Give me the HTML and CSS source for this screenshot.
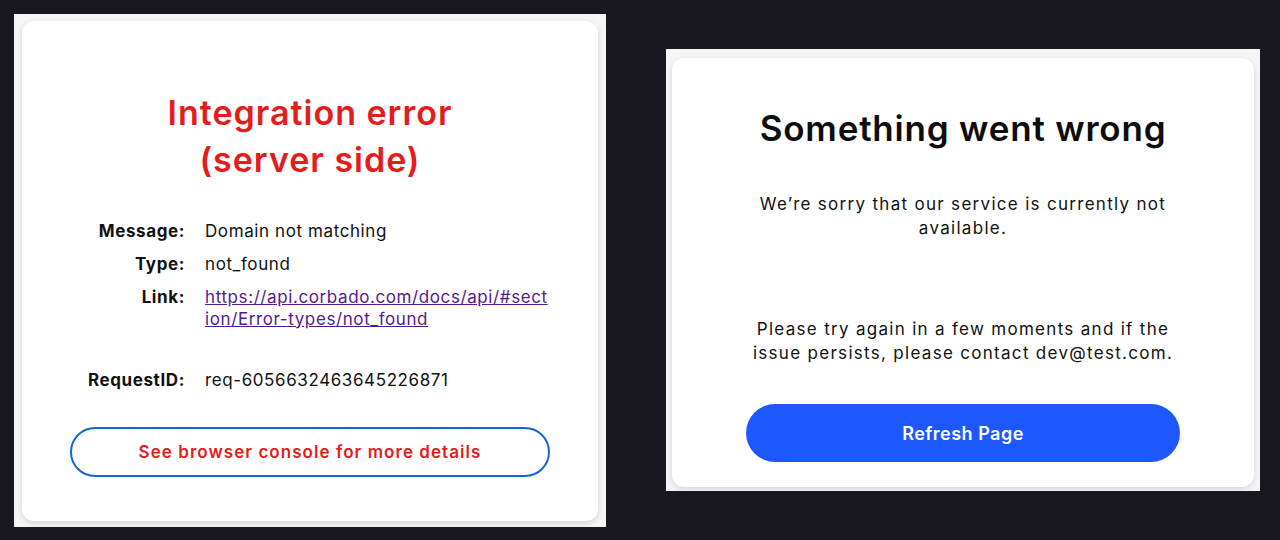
FILE: index.html
```html
<!DOCTYPE html>
<html lang="en">
<head>
<meta charset="utf-8">
<title>Errors</title>
<link rel="stylesheet" href="styles.css">
</head>
<body>
<main class="stage">
  <section class="frame frame-left">
    <div class="card card-error">
      <h1 class="error-title">Integration error<br>(server side)</h1>
      <dl class="details">
        <dt>Message:</dt><dd>Domain not matching</dd>
        <dt>Type:</dt><dd>not_found</dd>
        <dt>Link:</dt><dd><a class="doc-link" href="#">https://api.corbado.com/docs/api/#section/Error-types/not_found</a></dd>
        <dt class="req">RequestID:</dt><dd class="req">req-6056632463645226871</dd>
      </dl>
      <button class="console-btn" type="button">See browser console for more details</button>
    </div>
  </section>
  <section class="frame frame-right">
    <div class="card card-wrong">
      <h2 class="wrong-title">Something went wrong</h2>
      <p class="wrong-text first">We’re sorry that our service is currently not available.</p>
      <p class="wrong-text second">Please try again in a few moments and if the issue persists, please contact dev@test.com.</p>
      <button class="refresh-btn" type="button">Refresh Page</button>
    </div>
  </section>
</main>
</body>
</html>
```
FILE: styles.css
```css
* { box-sizing: border-box; }
html, body { margin: 0; padding: 0; }
body {
  background: #19171f;
  width: 1280px;
  height: 540px;
  overflow: hidden;
  font-family: "Inter", "Liberation Sans", sans-serif;
}
.stage {
  height: 540px;
  display: flex;
  align-items: center;
  padding-left: 14px;
  gap: 60px;
}
.frame {
  background: #f6f6f6;
  display: flex;
}
.frame-left {
  width: 592px;
  height: 513px;
  padding: 7px 8px 6px 8px;
}
.frame-right {
  width: 594px;
  height: 442px;
  padding: 9px 6px 4px 6px;
}
.card {
  flex: 1;
  background: #fff;
  border-radius: 12px;
  box-shadow: 0 2px 6px rgba(0, 0, 0, 0.14);
  display: flex;
  flex-direction: column;
  align-items: center;
}

/* left card */
.card-error { padding-top: 68px; }
.error-title {
  margin: 0;
  color: #e41c1c;
  font-size: 34px;
  line-height: 47px;
  font-weight: 600;
  text-align: center;
  letter-spacing: 1px;
}
.details {
  margin: 37px 0 0 0;
  width: 480px;
  display: grid;
  grid-template-columns: 115px 345px;
  column-gap: 20px;
  row-gap: 11px;
  font-size: 17px;
  line-height: 22px;
  letter-spacing: 0.6px;
  color: #111;
}
.details dt {
  font-weight: 700;
  text-align: right;
}
.details dd {
  margin: 0;
  word-break: break-all;
}
.details .req { margin-top: 28px; }
.doc-link { color: #551a8b; text-decoration: underline; }
.console-btn {
  margin-top: 36px;
  width: 480px;
  height: 50px;
  border: 2px solid #1565d6;
  border-radius: 25px;
  background: #fff;
  color: #e41c1c;
  font-family: "Inter", "Liberation Sans", sans-serif;
  font-size: 17px;
  font-weight: 600;
  letter-spacing: 1.05px;
}

/* right card */
.card-wrong { padding-top: 48px; }
.wrong-title {
  margin: 0;
  font-size: 35px;
  line-height: 44px;
  font-weight: 600;
  color: #0d0d0d;
  letter-spacing: 0.8px;
}
.wrong-text {
  margin: 0;
  width: 430px;
  text-align: center;
  font-size: 17px;
  line-height: 24px;
  letter-spacing: 1.3px;
  color: #111;
}
.wrong-text.first { margin-top: 42px; }
.wrong-text.second { margin-top: 77px; }
.refresh-btn {
  margin-top: 39px;
  width: 434px;
  height: 58px;
  border: none;
  border-radius: 29px;
  background: #1c57ff;
  color: #fff;
  font-family: "Inter", "Liberation Sans", sans-serif;
  font-size: 18px;
  font-weight: 600;
  letter-spacing: 0.5px;
}
```
